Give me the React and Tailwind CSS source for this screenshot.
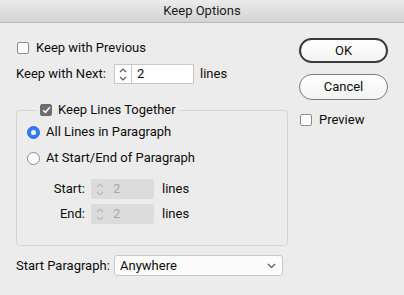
import { useState } from 'react'

const FONT = { fontFamily: 'Roboto, "Helvetica Neue", "Liberation Sans", sans-serif' }

export default function App() {
  const [keepPrev, setKeepPrev] = useState(false)
  const [keepTogether, setKeepTogether] = useState(true)
  const [mode, setMode] = useState('all')
  const [preview, setPreview] = useState(false)

  return (
    <div className="w-[404px] h-[295px] bg-[#ececec] text-[13px] text-[#0c0c0c] whitespace-nowrap overflow-hidden" style={FONT}>
      {/* Title bar */}
      <div className="h-[23px] flex items-center justify-center bg-gradient-to-b from-[#ebebeb] to-[#d3d3d3] border-b border-[#b8b8b8] text-[13px] text-[#1a1a1a]">
        Keep Options
      </div>

      <div className="flex px-4">
        {/* Left column */}
        <div className="w-[272px] pt-[15px]">
          <label className="h-5 flex items-center gap-[7px] pl-px">
            <Checkbox checked={keepPrev} onChange={() => setKeepPrev(!keepPrev)} />
            <span>Keep with Previous</span>
          </label>

          <div className="h-5 mt-[6px] flex items-center">
            <span className="w-[98px]">Keep with Next:</span>
            <Spinner value="2" className="w-[80px]" />
            <span className="ml-[6px]">lines</span>
          </div>

          <fieldset className="mt-[19px] border border-[#d3d3d3] rounded-[4px] pl-[10px] pb-[21px]">
            <legend className="ml-[9px] px-[4px] h-[14px] flex items-center">
              <label className="flex items-center gap-[6px]">
                <Checkbox checked={keepTogether} onChange={() => setKeepTogether(!keepTogether)} />
                <span>Keep Lines Together</span>
              </label>
            </legend>

            <div className="mt-[7px] h-4 flex items-center gap-[6px]">
              <Radio checked={mode === 'all'} onChange={() => setMode('all')} />
              <span>All Lines in Paragraph</span>
            </div>
            <div className="mt-[10px] h-4 flex items-center gap-[6px]">
              <Radio checked={mode === 'edge'} onChange={() => setMode('edge')} />
              <span>At Start/End of Paragraph</span>
            </div>

            <div className="mt-[13px] h-5 flex items-center">
              <span className="w-[58px] text-right">Start:</span>
              <Spinner value="2" disabled className="ml-[6px] w-[63px]" />
              <span className="ml-[8px]">lines</span>
            </div>
            <div className="mt-[5px] h-5 flex items-center">
              <span className="w-[58px] text-right">End:</span>
              <Spinner value="2" disabled className="ml-[6px] w-[63px]" />
              <span className="ml-[8px]">lines</span>
            </div>
          </fieldset>

          <div className="mt-[9px] h-[21px] flex items-center">
            <span className="w-[98px]">Start Paragraph:</span>
            <div className="w-[169px] h-[21px] flex items-center justify-between bg-[#fbfbfb] border border-[#c9c9c9] rounded-[3px] pl-[5px] pr-[6px]">
              <span>Anywhere</span>
              <svg width="9" height="6" viewBox="0 0 9 6" fill="none" stroke="#555" strokeWidth="1.2">
                <path d="M1 1l3.5 3.5L8 1" />
              </svg>
            </div>
          </div>
        </div>

        {/* Right column */}
        <div className="ml-auto w-[89px] pt-[15px] flex flex-col">
          <button className="block w-full h-[25px] rounded-full border-2 border-[#3a3a3a] bg-gradient-to-b from-white to-[#f3f3f3] text-[13px] text-[#0c0c0c]">
            OK
          </button>
          <button className="block mt-[11px] w-full h-[26px] rounded-full border border-[#7c7c7c] bg-gradient-to-b from-white to-[#f3f3f3] text-[13px] text-[#0c0c0c]">
            Cancel
          </button>
          <label className="mt-[12px] h-4 flex items-center gap-[7px] pl-px">
            <Checkbox checked={preview} onChange={() => setPreview(!preview)} />
            <span>Preview</span>
          </label>
        </div>
      </div>
    </div>
  )
}

function Checkbox({ checked, onChange }) {
  return (
    <span
      onClick={onChange}
      className={`w-[12px] h-[12px] shrink-0 rounded-[2px] flex items-center justify-center border ${
        checked ? 'bg-[#6e6e6e] border-[#6e6e6e]' : 'bg-white border-[#8c8c8c]'
      }`}
    >
      {checked && (
        <svg width="9" height="8" viewBox="0 0 9 8" fill="none" stroke="white" strokeWidth="1.6">
          <path d="M1.2 4.2l2.2 2.2L7.8 1.2" />
        </svg>
      )}
    </span>
  )
}

function Radio({ checked, onChange }) {
  return (
    <span
      onClick={onChange}
      className={`w-[13px] h-[13px] shrink-0 rounded-full flex items-center justify-center border ${
        checked ? 'bg-[#2f7bf5] border-[#2a6fe0]' : 'bg-white border-[#8c8c8c]'
      }`}
    >
      {checked && <span className="w-[5px] h-[5px] rounded-full bg-white" />}
    </span>
  )
}

function Spinner({ value, disabled, className = '' }) {
  const stroke = disabled ? '#b9b9b9' : '#555'
  return (
    <div
      className={`h-5 flex items-center ${
        disabled ? 'bg-[#dcdcdc] rounded-[2px]' : 'bg-white border border-[#c7c7c7]'
      } ${className}`}
    >
      <div className={`w-[17px] h-full flex flex-col items-center justify-center gap-[3px] ${disabled ? '' : 'border-r border-[#c7c7c7]'}`}>
        <svg width="8" height="5" viewBox="0 0 8 5" fill="none" stroke={stroke} strokeWidth="1.1">
          <path d="M1 4l3-3 3 3" />
        </svg>
        <svg width="8" height="5" viewBox="0 0 8 5" fill="none" stroke={stroke} strokeWidth="1.1">
          <path d="M1 1l3 3 3-3" />
        </svg>
      </div>
      <span className={`pl-[5px] ${disabled ? 'text-[#a9a9a9]' : ''}`}>{value}</span>
    </div>
  )
}
